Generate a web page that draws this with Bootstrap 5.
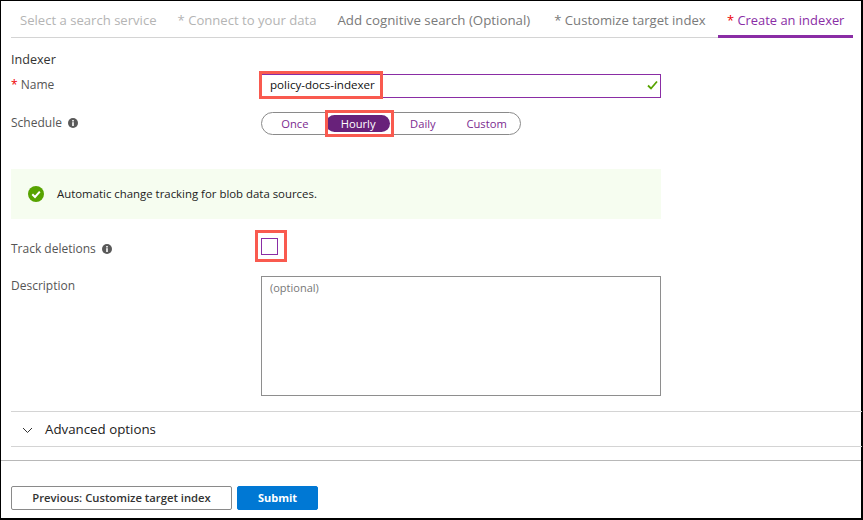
<!DOCTYPE html>
<html lang="en">
<head>
<meta charset="utf-8">
<title>Create an indexer</title>
<link href="https://cdn.jsdelivr.net/npm/bootstrap@5.3.0/dist/css/bootstrap.min.css" rel="stylesheet">
<style>
html,body{margin:0;height:520px;overflow:hidden;background:#fff}
body{font-family:"Open Sans","Noto Sans",sans-serif;font-size:11.5px;color:#444}
.frame{width:863px;height:520px;border:solid #000;border-width:1px 2px 2px 1px;position:relative;display:flex;flex-direction:column;background:#fff}
.wiz-tabs{margin:0 8px 0 10px;height:37px;border-bottom:1px solid #d4d4d4;display:flex;flex-wrap:nowrap;padding:0;list-style:none}
.wiz-tab{height:37px;padding:3px 10px 0 9px;line-height:33px;font-size:13.1px;white-space:nowrap;color:#7a7a7a}
.wiz-tab.off{color:#b4b4b4}
.wiz-tab.sp{padding-left:11px;padding-right:11px}
.wiz-tab.add{padding-left:10px;font-size:13.3px}
.wiz-tab.cust{padding-left:14px;padding-right:0}
.wiz-tab.on{color:#8a2da5;border-bottom:3px solid #8a2da5;margin-left:auto;padding:3px 0 0 9px;width:135px;font-size:12.9px}
.wiz-tab .req{color:#e00}
.form-area{padding:0 0 0 10px;width:660px}
.head{font-size:12.6px;color:#333;margin-top:13px;line-height:18px}
.frow{display:flex}
.flabel{width:250px;flex:none;font-size:12px;color:#555}
.flabel .req{color:#e00}
.info{display:inline-block;vertical-align:-1px;margin-left:3px}
.name-row{margin-top:5px;height:23px;line-height:22px}
.name-input{flex:1;height:24px;border:1px solid #8a2da5;border-radius:0;padding:0 2px 2px 8px;font-size:11.6px;line-height:20px;color:#111;display:flex;justify-content:space-between;align-items:center;background:#fff}
.sched-row{margin-top:15px;height:23px;line-height:22px}
.pills{width:260px;height:23px;border:1px solid #8a8a8a;border-radius:12px;display:flex;align-items:center;padding:0 2px;font-size:11.2px;color:#7b2a8f}
.pill{display:block;text-align:center;line-height:17px;height:17px;border-radius:9px}
.pill.p1{width:62px}
.pill.p2{width:64px;background:#68217a;color:#fff;margin-right:1px;padding-left:1px}
.pill.p3{width:64px;padding-left:1px}
.pill.p4{width:64px;padding-left:1px}
.banner{margin-top:34px;height:50px;background:#f6fdf0;display:flex;align-items:center;padding-left:17px;gap:13px;font-size:11.4px;color:#222}
.track-row{margin-top:19px;height:18px;line-height:22px}
.cbox{width:17px;height:17px;border:1px solid #8a2da5;display:block;background:#fff}
.desc-row{margin-top:20px;line-height:20px}
.desc-box{width:400px;height:120px;border:1px solid #8e8e8e;padding:3px 8px;font-size:11px;color:#777;line-height:16px;background:#fff}
.adv{margin:15px 0 0 10px;width:851px;height:36px;border-top:1px solid #d4d4d4;border-bottom:1px solid #d4d4d4;display:flex;align-items:center;padding:2px 0 0 11px;gap:12px;font-size:13.3px;color:#222}
.sep{border-top:1px solid #b8b8b8;margin-top:13px;height:0}
.foot{display:flex;gap:5px;margin:25px 0 0 10px}
.btn-prev{width:221px;height:24px;border:1px solid #8a8a8a;border-radius:2px;background:#fff;font-size:11.25px;font-weight:600;color:#333;padding:0;line-height:22px}
.btn-sub{width:81px;height:24px;border:1px solid #0078d4;border-radius:2px;background:#0078d4;color:#fff;font-size:11px;font-weight:700;padding:0;line-height:22px}
.mark-box{position:absolute;border:3px solid #f95a4f;pointer-events:none}
.m1{left:258px;top:70px;width:124px;height:28px}
.m2{left:324px;top:109px;width:69px;height:27px}
.m3{left:254px;top:229px;width:32px;height:32px}
</style>
</head>
<body>
<div class="frame">
  <ul class="wiz-tabs">
    <li class="wiz-tab off">Select a search service</li>
    <li class="wiz-tab off sp">* Connect to your data</li>
    <li class="wiz-tab add">Add cognitive search (Optional)</li>
    <li class="wiz-tab cust">* Customize target index</li>
    <li class="wiz-tab on"><span class="req">*</span> Create an indexer</li>
  </ul>
  <div class="form-area">
    <div class="head">Indexer</div>
    <div class="frow name-row">
      <div class="flabel"><span class="req">*</span> Name</div>
      <div class="name-input"><span>policy-docs-indexer</span>
        <svg width="11" height="10" viewBox="0 0 11 10"><path d="M1 5.5 4 8.5 10 1.5" fill="none" stroke="#57a300" stroke-width="1.8"/></svg>
      </div>
    </div>
    <div class="frow sched-row">
      <div class="flabel">Schedule <svg class="info" width="10" height="10" viewBox="0 0 10 10"><circle cx="5" cy="5" r="5" fill="#595959"/><rect x="4.2" y="4.2" width="1.6" height="3.8" fill="#fff"/><rect x="4.2" y="2" width="1.6" height="1.5" fill="#fff"/></svg></div>
      <div class="pills">
        <span class="pill p1">Once</span><span class="pill p2">Hourly</span><span class="pill p3">Daily</span><span class="pill p4">Custom</span>
      </div>
    </div>
    <div class="banner">
      <svg width="16" height="16" viewBox="0 0 16 16"><circle cx="8" cy="8" r="8" fill="#57a300"/><path d="M4.3 8.3 7 11 11.8 5.6" fill="none" stroke="#fff" stroke-width="2"/></svg>
      <span>Automatic change tracking for blob data sources.</span>
    </div>
    <div class="frow track-row">
      <div class="flabel">Track deletions <svg class="info" width="10" height="10" viewBox="0 0 10 10"><circle cx="5" cy="5" r="5" fill="#595959"/><rect x="4.2" y="4.2" width="1.6" height="3.8" fill="#fff"/><rect x="4.2" y="2" width="1.6" height="1.5" fill="#fff"/></svg></div>
      <span class="cbox"></span>
    </div>
    <div class="frow desc-row">
      <div class="flabel">Description</div>
      <div class="desc-box">(optional)</div>
    </div>
  </div>
  <div class="adv">
    <svg width="11" height="7" viewBox="0 0 11 7"><path d="M1 1 5.5 5.5 10 1" fill="none" stroke="#333" stroke-width="1"/></svg>
    <span>Advanced options</span>
  </div>
  <div class="sep"></div>
  <div class="foot">
    <button type="button" class="btn btn-prev">Previous: Customize target index</button>
    <button type="button" class="btn btn-sub">Submit</button>
  </div>
  <div class="mark-box m1"></div>
  <div class="mark-box m2"></div>
  <div class="mark-box m3"></div>
</div>
</body>
</html>
